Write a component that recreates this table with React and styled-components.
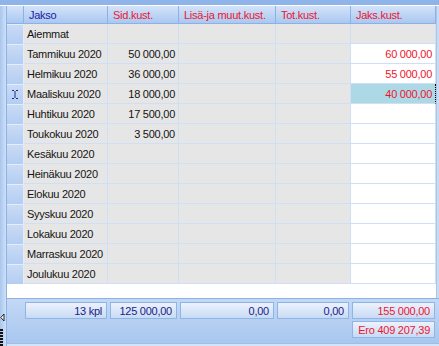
import React from 'react';
import styled, { createGlobalStyle } from 'styled-components';

const GlobalStyle = createGlobalStyle`
  html, body {
    margin: 0;
    padding: 0;
    background: #ffffff;
  }
  body {
    font-family: "Liberation Sans", Arial, sans-serif;
    font-size: 11px;
  }
`;

const columns = '17px 84px 71px 97px 75px 85px';

const rows = [
  { name: 'Aiemmat', sid: '', jaks: '', grey: true },
  { name: 'Tammikuu 2020', sid: '50 000,00', jaks: '60 000,00' },
  { name: 'Helmikuu 2020', sid: '36 000,00', jaks: '55 000,00' },
  { name: 'Maaliskuu 2020', sid: '18 000,00', jaks: '40 000,00', current: true },
  { name: 'Huhtikuu 2020', sid: '17 500,00', jaks: '' },
  { name: 'Toukokuu 2020', sid: '3 500,00', jaks: '' },
  { name: 'Kesäkuu 2020', sid: '', jaks: '' },
  { name: 'Heinäkuu 2020', sid: '', jaks: '' },
  { name: 'Elokuu 2020', sid: '', jaks: '' },
  { name: 'Syyskuu 2020', sid: '', jaks: '' },
  { name: 'Lokakuu 2020', sid: '', jaks: '' },
  { name: 'Marraskuu 2020', sid: '', jaks: '' },
  { name: 'Joulukuu 2020', sid: '', jaks: '' },
];

const Window = styled.div`
  width: 439px;
  height: 346px;
  display: flex;
  flex-direction: column;
  overflow: hidden;
  letter-spacing: -0.25px;
`;

const TopBand = styled.div`
  height: 5px;
  background: #8fb4e9;
  border-bottom: 1px solid #ffffff;
`;

const Body = styled.div`
  flex: 1;
  display: flex;
  min-height: 0;
`;

const LeftFrame = styled.div`
  width: 6px;
  border-right: 1px solid #8db2e6;
  background: linear-gradient(to right, #a9c6ee, #cfe0f7);
  display: flex;
  flex-direction: column;
  justify-content: flex-end;
  gap: 6px;
`;

const Content = styled.div`
  flex: 1;
  display: flex;
  flex-direction: column;
`;

const TableArea = styled.div`
  flex: 1;
  display: flex;
  background: #ffffff;
`;

const Table = styled.div`
  display: grid;
  grid-template-columns: ${columns};
  grid-auto-rows: 20px;
  grid-template-rows: 18px;
  align-content: start;
`;

const RightStrip = styled.div`
  width: 2px;
  border-left: 1px solid #a8c6ee;
  background: #cadcf5;
`;

const HeaderCell = styled.div`
  box-sizing: border-box;
  display: flex;
  align-items: center;
  padding: 0 5px;
  background: linear-gradient(to bottom, #d3e3f9, #aac8f0);
  border-right: 1px solid #8cb1e5;
  border-bottom: 1px solid #8cb1e5;
  color: ${p => (p.$blue ? '#1b1ba6' : '#f0142c')};
  white-space: nowrap;
  overflow: hidden;
`;

const RowHead = styled.div`
  box-sizing: border-box;
  display: flex;
  align-items: center;
  justify-content: center;
  background: linear-gradient(to bottom, #c9dbf6, #b4cdf1);
  border-top: 1px solid #e4eefb;
  border-right: 1px solid #e2ecfa;
`;

const Cell = styled.div`
  box-sizing: border-box;
  display: flex;
  align-items: center;
  justify-content: ${p => (p.$right ? 'flex-end' : 'flex-start')};
  padding: 0 3px;
  background: ${p => p.$bg || '#e6e6e6'};
  border-right: 1px solid #cfe0f6;
  border-bottom: 1px solid #cfe0f6;
  color: ${p => p.$color || '#141414'};
  white-space: nowrap;
  overflow: hidden;
  ${p => p.$focus && 'border-right: 1px dotted #000000;'}
`;

const Footer = styled.div`
  height: 46px;
  border-top: 1px solid #8cb1e5;
  border-bottom: 1px solid #9dbdea;
  background: linear-gradient(to bottom, #c3d8f5, #a9c7ef);
  display: grid;
  grid-template-columns: 82px 67px 94px 72px 83px;
  grid-template-rows: 17px 17px;
  column-gap: 3px;
  row-gap: 2px;
  padding: 3px 0 0 18px;
  box-sizing: border-box;
`;

const BottomEdge = styled.div`
  height: 2px;
  background: #d3e3f8;
`;

const FooterCell = styled.div`
  box-sizing: border-box;
  display: flex;
  align-items: center;
  justify-content: flex-end;
  padding: 0 4px;
  background: linear-gradient(to bottom, #ecf2fc, #c8dbf5);
  border: 1px solid #8fb4e6;
  color: ${p => (p.$red ? '#f0142c' : '#1c1c86')};
  grid-column: ${p => p.$col || 'auto'};
  grid-row: ${p => p.$row || 'auto'};
  white-space: nowrap;
`;

const IBeam = () => (
  <svg width="6" height="9" viewBox="0 0 6 9">
    <path d="M0 0.5H2M4 0.5H6M3 1V8M0 8.5H2M4 8.5H6" stroke="#1c2a88" strokeWidth="1" fill="none" />
  </svg>
);

const Arrow = () => (
  <svg width="5" height="9" viewBox="0 0 5 9">
    <path d="M4 1L0.8 4.5L4 8Z" fill="#ffffff" stroke="#222" strokeWidth="1" />
  </svg>
);

const Grip = () => (
  <svg width="4" height="18" viewBox="0 0 4 18">
    {[0, 1, 2, 3, 4, 5].map(i => (
      <rect key={i} x="0" y={1 + i * 3} width="3" height="2" fill="#111" />
    ))}
  </svg>
);

export default function App() {
  return (
    <Window>
      <GlobalStyle />
      <TopBand />
      <Body>
        <LeftFrame>
          <Arrow />
          <Grip />
        </LeftFrame>
        <Content>
          <TableArea>
            <Table>
              <HeaderCell />
              <HeaderCell $blue>Jakso</HeaderCell>
              <HeaderCell>Sid.kust.</HeaderCell>
              <HeaderCell>Lisä-ja muut.kust.</HeaderCell>
              <HeaderCell>Tot.kust.</HeaderCell>
              <HeaderCell>Jaks.kust.</HeaderCell>
              {rows.map(r => (
                <React.Fragment key={r.name}>
                  <RowHead>{r.current && <IBeam />}</RowHead>
                  <Cell>{r.name}</Cell>
                  <Cell $right>{r.sid}</Cell>
                  <Cell />
                  <Cell />
                  <Cell
                    $right
                    $color="#f0142c"
                    $focus={r.current}
                    $bg={r.grey ? '#e6e6e6' : r.current ? '#add8e6' : '#ffffff'}
                  >
                    {r.jaks}
                  </Cell>
                </React.Fragment>
              ))}
            </Table>
            <RightStrip />
          </TableArea>
          <Footer>
            <FooterCell>13 kpl</FooterCell>
            <FooterCell>125 000,00</FooterCell>
            <FooterCell>0,00</FooterCell>
            <FooterCell>0,00</FooterCell>
            <FooterCell $red>155 000,00</FooterCell>
            <FooterCell $red $col="5" $row="2">Ero 409 207,39</FooterCell>
          </Footer>
          <BottomEdge />
        </Content>
      </Body>
    </Window>
  );
}
